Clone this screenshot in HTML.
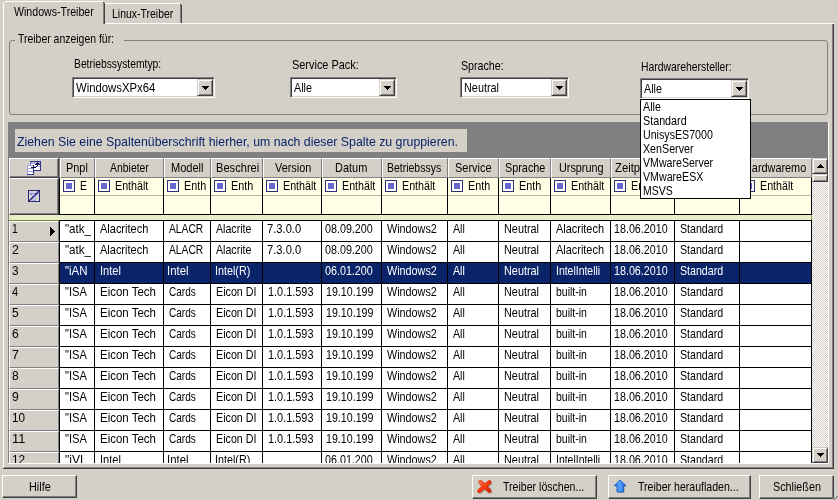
<!DOCTYPE html>
<html lang="de"><head><meta charset="utf-8"><title>Treiber</title>
<style>
html,body{margin:0;padding:0}
body{width:838px;height:500px;overflow:hidden;background:#d4d0c8;position:relative;font-family:"Liberation Sans",sans-serif;font-size:13px;line-height:15px;color:#000}
#app{position:absolute;left:0;top:0;width:838px;height:500px;overflow:hidden;will-change:opacity}
.a{position:absolute}
.t{position:absolute;white-space:nowrap;transform-origin:0 0;display:block}
.btn{background:#d4d0c8;box-sizing:border-box;border:1px solid;border-color:#fff #404040 #404040 #fff;box-shadow:inset -1px -1px 0 #808080}
.sbtn{background:#d4d0c8;box-sizing:border-box;border:1px solid;border-color:#d4d0c8 #404040 #404040 #d4d0c8;box-shadow:inset 1px 1px 0 #fff, inset -1px -1px 0 #808080}
.sunk{box-sizing:border-box;border:1px solid;border-color:#808080 #fff #fff #808080;box-shadow:inset 1px 1px 0 #404040, inset -1px -1px 0 #d4d0c8}
.hd{background:#d4d0c8;box-sizing:border-box;border:1px solid;border-color:#fff #808080 #808080 #fff}
.hd2{background:#d4d0c8;box-sizing:border-box;border:1px solid;border-color:#fff #404040 #404040 #fff;box-shadow:inset -1px -1px 0 #808080}
.rh{background:#d4d0c8;box-sizing:border-box;border:1px solid;border-color:#fff #808080 #808080 #fff}
.cb{width:12px;height:12px;box-sizing:border-box;border:1px solid #30307c;background:#fff}
.trk{background:repeating-conic-gradient(#fff 0 25%, #d4d0c8 0 50%) 0 0/2px 2px}
</style></head>
<body>
<div id="app">
<!-- tab control -->
<div class="a" style="left:3px;top:23px;width:831px;height:1px;background:#fff"></div>
<div class="a" style="left:3px;top:23px;width:1px;height:445px;background:#fff"></div>
<div class="a" style="left:832px;top:24px;width:1px;height:444px;background:#808080"></div>
<div class="a" style="left:833px;top:24px;width:1px;height:445px;background:#404040"></div>
<div class="a" style="left:4px;top:467px;width:829px;height:1px;background:#808080"></div>
<div class="a" style="left:3px;top:468px;width:831px;height:1px;background:#404040"></div>
<div class="a" style="left:105px;top:3px;width:75px;height:1px;background:#fff"></div>
<div class="a" style="left:180px;top:5px;width:1px;height:18px;background:#808080"></div>
<div class="a" style="left:181px;top:5px;width:1px;height:18px;background:#404040"></div>
<div class="a" style="left:180px;top:4px;width:1px;height:1px;background:#404040"></div>
<span class="t" style="left:111.79px;top:6px;transform:scaleX(0.8053)">Linux-Treiber</span>
<div class="a" style="left:3px;top:1px;width:102px;height:23px;background:#d4d0c8"></div>
<div class="a" style="left:5px;top:1px;width:98px;height:1px;background:#fff"></div>
<div class="a" style="left:4px;top:2px;width:1px;height:1px;background:#fff"></div>
<div class="a" style="left:3px;top:3px;width:1px;height:21px;background:#fff"></div>
<div class="a" style="left:103px;top:3px;width:1px;height:21px;background:#808080"></div>
<div class="a" style="left:104px;top:3px;width:1px;height:21px;background:#404040"></div>
<div class="a" style="left:103px;top:2px;width:1px;height:1px;background:#404040"></div>
<span class="t" style="left:14.2px;top:4px;transform:scaleX(0.8156)">Windows-Treiber</span>
<!-- group box -->
<div class="a" style="left:9px;top:40px;width:819px;height:75px;border:1px solid #808080;border-radius:3px;box-sizing:border-box"></div>
<div class="a" style="left:15px;top:33px;width:109px;height:14px;background:#d4d0c8"></div>
<span class="t" style="left:17.84px;top:31px;transform:scaleX(0.8037)">Treiber anzeigen für:</span>
<span class="t" style="left:73.71px;top:56px;transform:scaleX(0.7939)">Betriebssystemtyp:</span>
<span class="t" style="left:292.08px;top:57px;transform:scaleX(0.8408)">Service Pack:</span>
<span class="t" style="left:461.29px;top:58px;transform:scaleX(0.8194)">Sprache:</span>
<span class="t" style="left:640.9px;top:59px;transform:scaleX(0.7996)">Hardwarehersteller:</span>
<div class="a sunk" style="left:72px;top:77px;width:143px;height:21px;background:#fff"><div class="a sbtn" style="right:1px;top:1px;width:16px;height:17px"></div></div>
<div class="a" style="left:202px;top:86px;width:7px;height:1px;background:#000"></div><div class="a" style="left:203px;top:87px;width:5px;height:1px;background:#000"></div><div class="a" style="left:204px;top:88px;width:3px;height:1px;background:#000"></div><div class="a" style="left:205px;top:89px;width:1px;height:1px;background:#000"></div>
<span class="t" style="left:76.0px;top:80px;transform:scaleX(0.8710)">WindowsXPx64</span>
<div class="a sunk" style="left:290px;top:77px;width:107px;height:21px;background:#fff"><div class="a sbtn" style="right:1px;top:1px;width:16px;height:17px"></div></div>
<div class="a" style="left:384px;top:86px;width:7px;height:1px;background:#000"></div><div class="a" style="left:385px;top:87px;width:5px;height:1px;background:#000"></div><div class="a" style="left:386px;top:88px;width:3px;height:1px;background:#000"></div><div class="a" style="left:387px;top:89px;width:1px;height:1px;background:#000"></div>
<span class="t" style="left:293.5px;top:80px;transform:scaleX(0.8294)">Alle</span>
<div class="a sunk" style="left:460px;top:77px;width:109px;height:21px;background:#fff"><div class="a sbtn" style="right:1px;top:1px;width:16px;height:17px"></div></div>
<div class="a" style="left:556px;top:86px;width:7px;height:1px;background:#000"></div><div class="a" style="left:557px;top:87px;width:5px;height:1px;background:#000"></div><div class="a" style="left:558px;top:88px;width:3px;height:1px;background:#000"></div><div class="a" style="left:559px;top:89px;width:1px;height:1px;background:#000"></div>
<span class="t" style="left:463.66px;top:80px;transform:scaleX(0.8354)">Neutral</span>
<div class="a sunk" style="left:640px;top:78px;width:109px;height:21px;background:#fff"><div class="a sbtn" style="right:1px;top:1px;width:16px;height:17px"></div></div>
<div class="a" style="left:736px;top:87px;width:7px;height:1px;background:#000"></div><div class="a" style="left:737px;top:88px;width:5px;height:1px;background:#000"></div><div class="a" style="left:738px;top:89px;width:3px;height:1px;background:#000"></div><div class="a" style="left:739px;top:90px;width:1px;height:1px;background:#000"></div>
<span class="t" style="left:643.5px;top:81px;transform:scaleX(0.8294)">Alle</span>
<!-- grid -->
<div class="a" style="left:8px;top:122px;width:820px;height:341px;background:#808080"></div>
<div class="a" style="left:8px;top:463px;width:821px;height:1px;background:#fff"></div>
<div class="a" style="left:828px;top:122px;width:1px;height:342px;background:#fff"></div>
<div class="a" style="left:15px;top:129px;width:452px;height:23px;background:#d4d0c8"></div>
<span class="t" style="left:17.32px;top:134px;transform:scaleX(0.9474);color:#0a246a">Ziehen Sie eine Spaltenüberschrift hierher, um nach dieser Spalte zu gruppieren.</span>
<div class="a" style="left:9px;top:158px;width:803px;height:305px;background:#fff;overflow:hidden">
<div class="a" style="left:0px;top:0px;width:803px;height:20px;background:#d4d0c8"></div>
<div class="a hd2" style="left:0;top:0;width:50px;height:20px"><svg class="a" style="left:17px;top:2px" width="14" height="14" viewBox="0 0 14 14" shape-rendering="crispEdges"><rect x="3" y="0" width="11" height="10" fill="#34348c"/><rect x="3" y="1" width="1" height="8" fill="#7c7ccc"/><rect x="4" y="1" width="9" height="2" fill="#a0a0e0"/><rect x="5" y="1" width="2" height="1" fill="#d0d0f0"/><rect x="8" y="1" width="2" height="1" fill="#d0d0f0"/><rect x="4" y="3" width="9" height="6" fill="#fff"/><rect x="4" y="5" width="9" height="1" fill="#a0a0e0"/><rect x="0" y="4" width="7" height="10" fill="#34348c"/><rect x="0" y="4" width="6" height="1" fill="#a0a0e0"/><rect x="0" y="4" width="1" height="9" fill="#a0a0e0"/><rect x="1" y="5" width="5" height="8" fill="#fff"/><rect x="1" y="7" width="5" height="1" fill="#a0a0e0"/><rect x="1" y="10" width="5" height="1" fill="#a0a0e0"/><rect x="4" y="6" width="5" height="1" fill="#14143c"/><rect x="9" y="5" width="1" height="1" fill="#14143c"/><rect x="10" y="3" width="1" height="2" fill="#14143c"/><rect x="8" y="3" width="5" height="1" fill="#14143c"/><rect x="9" y="2" width="3" height="1" fill="#14143c"/><rect x="10" y="1" width="1" height="1" fill="#14143c"/></svg></div>
<div class="a" style="left:50px;top:0px;width:1px;height:20px;background:#808080"></div>
<div class="a hd" style="left:51px;top:0px;width:35px;height:20px;overflow:hidden;"><span class="t" style="left:4.96px;top:1px;transform:scaleX(0.8388)">Pnpl</span></div>
<div class="a hd" style="left:86px;top:0px;width:69px;height:20px;overflow:hidden;"><span class="t" style="left:14.0px;top:1px;transform:scaleX(0.8023)">Anbieter</span></div>
<div class="a hd" style="left:155px;top:0px;width:47px;height:20px;overflow:hidden;"><span class="t" style="left:6.15px;top:1px;transform:scaleX(0.8493)">Modell</span></div>
<div class="a hd" style="left:202px;top:0px;width:52px;height:20px;overflow:hidden;"><span class="t" style="left:4.14px;top:1px;transform:scaleX(0.8555)">Beschrei</span></div>
<div class="a hd" style="left:254px;top:0px;width:59px;height:20px;overflow:hidden;"><span class="t" style="left:11.0px;top:1px;transform:scaleX(0.8353)">Version</span></div>
<div class="a hd" style="left:313px;top:0px;width:60px;height:20px;overflow:hidden;"><span class="t" style="left:12.41px;top:1px;transform:scaleX(0.8425)">Datum</span></div>
<div class="a hd" style="left:373px;top:0px;width:66px;height:20px;overflow:hidden;"><span class="t" style="left:4.44px;top:1px;transform:scaleX(0.8055)">Betriebssys</span></div>
<div class="a hd" style="left:439px;top:0px;width:51px;height:20px;overflow:hidden;"><span class="t" style="left:6.08px;top:1px;transform:scaleX(0.8452)">Service</span></div>
<div class="a hd" style="left:490px;top:0px;width:52px;height:20px;overflow:hidden;"><span class="t" style="left:5.08px;top:1px;transform:scaleX(0.8333)">Sprache</span></div>
<div class="a hd" style="left:542px;top:0px;width:60px;height:20px;overflow:hidden;"><span class="t" style="left:7.17px;top:1px;transform:scaleX(0.8333)">Ursprung</span></div>
<div class="a hd" style="left:602px;top:0px;width:64px;height:20px;overflow:hidden;"><span class="t" style="left:2.65px;top:1px;transform:scaleX(0.8664)">Zeitp</span></div>
<div class="a hd" style="left:666px;top:0px;width:65px;height:20px;overflow:hidden;"></div>
<div class="a hd" style="left:731px;top:0px;width:72px;height:20px;overflow:hidden;"><span class="t" style="left:3.46px;top:1px;transform:scaleX(0.8361)">Hardwaremo</span></div>
<div class="a" style="left:51px;top:20px;width:752px;height:36px;background:#ffffe6"></div>
<div class="a" style="left:51px;top:37px;width:752px;height:1px;background:#b4b4ac"></div>
<div class="a hd2" style="left:0;top:20px;width:50px;height:37px"><svg class="a" style="left:18px;top:11px" width="12" height="12" viewBox="0 0 12 12"><rect x="0.5" y="0.5" width="11" height="11" fill="#dcd8cc" stroke="#28287c" stroke-width="1"/><path d="M1 3 H11 L7.500 6.800 V11 H4.800 V6.800 Z" fill="#8484ec"/><path d="M3.500 4.200 H8.500 L6.600 6.400 V10.500 H5.600 V6.400 Z" fill="#fff"/><path d="M1 11 L11 1" stroke="#20206c" stroke-width="1.3"/></svg></div>
<div class="a" style="left:51px;top:20px;width:34px;height:17px;overflow:hidden;"><div class="a cb" style="left:3px;top:2px"><div class="a" style="left:2px;top:2px;width:6px;height:6px;background:#6868cc"></div></div><span class="t" style="left:19.8px;top:0px;transform:scaleX(0.7986)">E</span></div>
<div class="a" style="left:86px;top:20px;width:68px;height:17px;overflow:hidden;"><div class="a cb" style="left:3px;top:2px"><div class="a" style="left:2px;top:2px;width:6px;height:6px;background:#6868cc"></div></div><span class="t" style="left:19.78px;top:0px;transform:scaleX(0.8228)">Enthält</span></div>
<div class="a" style="left:155px;top:20px;width:46px;height:17px;overflow:hidden;"><div class="a cb" style="left:3px;top:2px"><div class="a" style="left:2px;top:2px;width:6px;height:6px;background:#6868cc"></div></div><span class="t" style="left:19.77px;top:0px;transform:scaleX(0.8273)">Enth</span></div>
<div class="a" style="left:202px;top:20px;width:51px;height:17px;overflow:hidden;"><div class="a cb" style="left:3px;top:2px"><div class="a" style="left:2px;top:2px;width:6px;height:6px;background:#6868cc"></div></div><span class="t" style="left:19.77px;top:0px;transform:scaleX(0.8273)">Enth</span></div>
<div class="a" style="left:254px;top:20px;width:58px;height:17px;overflow:hidden;"><div class="a cb" style="left:3px;top:2px"><div class="a" style="left:2px;top:2px;width:6px;height:6px;background:#6868cc"></div></div><span class="t" style="left:19.78px;top:0px;transform:scaleX(0.8228)">Enthält</span></div>
<div class="a" style="left:313px;top:20px;width:59px;height:17px;overflow:hidden;"><div class="a cb" style="left:3px;top:2px"><div class="a" style="left:2px;top:2px;width:6px;height:6px;background:#6868cc"></div></div><span class="t" style="left:19.78px;top:0px;transform:scaleX(0.8228)">Enthält</span></div>
<div class="a" style="left:373px;top:20px;width:65px;height:17px;overflow:hidden;"><div class="a cb" style="left:3px;top:2px"><div class="a" style="left:2px;top:2px;width:6px;height:6px;background:#6868cc"></div></div><span class="t" style="left:19.78px;top:0px;transform:scaleX(0.8228)">Enthält</span></div>
<div class="a" style="left:439px;top:20px;width:50px;height:17px;overflow:hidden;"><div class="a cb" style="left:3px;top:2px"><div class="a" style="left:2px;top:2px;width:6px;height:6px;background:#6868cc"></div></div><span class="t" style="left:19.77px;top:0px;transform:scaleX(0.8273)">Enth</span></div>
<div class="a" style="left:490px;top:20px;width:51px;height:17px;overflow:hidden;"><div class="a cb" style="left:3px;top:2px"><div class="a" style="left:2px;top:2px;width:6px;height:6px;background:#6868cc"></div></div><span class="t" style="left:19.77px;top:0px;transform:scaleX(0.8273)">Enth</span></div>
<div class="a" style="left:542px;top:20px;width:59px;height:17px;overflow:hidden;"><div class="a cb" style="left:3px;top:2px"><div class="a" style="left:2px;top:2px;width:6px;height:6px;background:#6868cc"></div></div><span class="t" style="left:19.78px;top:0px;transform:scaleX(0.8228)">Enthält</span></div>
<div class="a" style="left:602px;top:20px;width:63px;height:17px;overflow:hidden;"><div class="a cb" style="left:3px;top:2px"><div class="a" style="left:2px;top:2px;width:6px;height:6px;background:#6868cc"></div></div><span class="t" style="left:19.78px;top:0px;transform:scaleX(0.8228)">Enthält</span></div>
<div class="a" style="left:666px;top:20px;width:64px;height:17px;overflow:hidden;"><div class="a cb" style="left:3px;top:2px"><div class="a" style="left:2px;top:2px;width:6px;height:6px;background:#6868cc"></div></div><span class="t" style="left:19.78px;top:0px;transform:scaleX(0.8228)">Enthält</span></div>
<div class="a" style="left:731px;top:20px;width:71px;height:17px;overflow:hidden;"><div class="a cb" style="left:3px;top:2px"><div class="a" style="left:2px;top:2px;width:6px;height:6px;background:#6868cc"></div></div><span class="t" style="left:19.78px;top:0px;transform:scaleX(0.8228)">Enthält</span></div>
<div class="a" style="left:50px;top:20px;width:1px;height:37px;background:#000"></div>
<div class="a" style="left:85px;top:20px;width:1px;height:37px;background:#000"></div>
<div class="a" style="left:154px;top:20px;width:1px;height:37px;background:#000"></div>
<div class="a" style="left:201px;top:20px;width:1px;height:37px;background:#000"></div>
<div class="a" style="left:253px;top:20px;width:1px;height:37px;background:#000"></div>
<div class="a" style="left:312px;top:20px;width:1px;height:37px;background:#000"></div>
<div class="a" style="left:372px;top:20px;width:1px;height:37px;background:#000"></div>
<div class="a" style="left:438px;top:20px;width:1px;height:37px;background:#000"></div>
<div class="a" style="left:489px;top:20px;width:1px;height:37px;background:#000"></div>
<div class="a" style="left:541px;top:20px;width:1px;height:37px;background:#000"></div>
<div class="a" style="left:601px;top:20px;width:1px;height:37px;background:#000"></div>
<div class="a" style="left:665px;top:20px;width:1px;height:37px;background:#000"></div>
<div class="a" style="left:730px;top:20px;width:1px;height:37px;background:#000"></div>
<div class="a" style="left:802px;top:20px;width:1px;height:37px;background:#000"></div>
<div class="a" style="left:50px;top:56px;width:753px;height:1px;background:#000"></div>
<div class="a" style="left:0px;top:57px;width:803px;height:6px;background:#e8eec8"></div>
<div class="a" style="left:0px;top:62px;width:50px;height:1px;background:#7c8438"></div>
<div class="a" style="left:50px;top:62px;width:753px;height:1px;background:#000"></div>
<div class="a" style="left:802px;top:57px;width:1px;height:5px;background:#98a650"></div>
<div class="a rh" style="left:0px;top:63px;width:50px;height:21px;overflow:hidden;"><span class="t" style="left:2.28px;top:-1px;transform:scaleX(0.8000)">1</span><div class="a" style="left:40px;top:5px;width:1px;height:9px;background:#000"></div><div class="a" style="left:41px;top:6px;width:1px;height:7px;background:#000"></div><div class="a" style="left:42px;top:7px;width:1px;height:5px;background:#000"></div><div class="a" style="left:43px;top:8px;width:1px;height:3px;background:#000"></div><div class="a" style="left:44px;top:9px;width:1px;height:1px;background:#000"></div></div>
<div class="a" style="left:51px;top:63px;width:34px;height:20px;overflow:hidden;"><span class="t" style="left:5.05px;top:0px;transform:scaleX(0.8910)">"atk_</span></div>
<div class="a" style="left:86px;top:63px;width:68px;height:20px;overflow:hidden;"><span class="t" style="left:4.7px;top:0px;transform:scaleX(0.8452)">Alacritech</span></div>
<div class="a" style="left:155px;top:63px;width:46px;height:20px;overflow:hidden;"><span class="t" style="left:4.75px;top:0px;transform:scaleX(0.7886)">ALACR</span></div>
<div class="a" style="left:202px;top:63px;width:51px;height:20px;overflow:hidden;"><span class="t" style="left:4.5px;top:0px;transform:scaleX(0.8178)">Alacrite</span></div>
<div class="a" style="left:254px;top:63px;width:58px;height:20px;overflow:hidden;"><span class="t" style="left:4.48px;top:0px;transform:scaleX(0.8592)">7.3.0.0</span></div>
<div class="a" style="left:313px;top:63px;width:59px;height:20px;overflow:hidden;"><span class="t" style="left:3.09px;top:0px;transform:scaleX(0.8260)">08.09.200</span></div>
<div class="a" style="left:373px;top:63px;width:65px;height:20px;overflow:hidden;"><span class="t" style="left:5.0px;top:0px;transform:scaleX(0.8305)">Windows2</span></div>
<div class="a" style="left:439px;top:63px;width:50px;height:20px;overflow:hidden;"><span class="t" style="left:5.0px;top:0px;transform:scaleX(0.8212)">All</span></div>
<div class="a" style="left:490px;top:63px;width:51px;height:20px;overflow:hidden;"><span class="t" style="left:4.66px;top:0px;transform:scaleX(0.8354)">Neutral</span></div>
<div class="a" style="left:542px;top:63px;width:59px;height:20px;overflow:hidden;"><span class="t" style="left:4.75px;top:0px;transform:scaleX(0.8407)">Alacritech</span></div>
<div class="a" style="left:602px;top:63px;width:63px;height:20px;overflow:hidden;"><span class="t" style="left:3.26px;top:0px;transform:scaleX(0.8242)">18.06.2010</span></div>
<div class="a" style="left:666px;top:63px;width:64px;height:20px;overflow:hidden;"><span class="t" style="left:5.09px;top:0px;transform:scaleX(0.8171)">Standard</span></div>
<div class="a" style="left:50px;top:83px;width:753px;height:1px;background:#000"></div>
<div class="a rh" style="left:0px;top:84px;width:50px;height:21px;overflow:hidden;"><span class="t" style="left:2.03px;top:-1px;transform:scaleX(0.9500)">2</span></div>
<div class="a" style="left:51px;top:84px;width:34px;height:20px;overflow:hidden;"><span class="t" style="left:5.05px;top:0px;transform:scaleX(0.8910)">"atk_</span></div>
<div class="a" style="left:86px;top:84px;width:68px;height:20px;overflow:hidden;"><span class="t" style="left:4.7px;top:0px;transform:scaleX(0.8452)">Alacritech</span></div>
<div class="a" style="left:155px;top:84px;width:46px;height:20px;overflow:hidden;"><span class="t" style="left:4.75px;top:0px;transform:scaleX(0.7886)">ALACR</span></div>
<div class="a" style="left:202px;top:84px;width:51px;height:20px;overflow:hidden;"><span class="t" style="left:4.5px;top:0px;transform:scaleX(0.8178)">Alacrite</span></div>
<div class="a" style="left:254px;top:84px;width:58px;height:20px;overflow:hidden;"><span class="t" style="left:4.48px;top:0px;transform:scaleX(0.8592)">7.3.0.0</span></div>
<div class="a" style="left:313px;top:84px;width:59px;height:20px;overflow:hidden;"><span class="t" style="left:3.09px;top:0px;transform:scaleX(0.8260)">08.09.200</span></div>
<div class="a" style="left:373px;top:84px;width:65px;height:20px;overflow:hidden;"><span class="t" style="left:5.0px;top:0px;transform:scaleX(0.8305)">Windows2</span></div>
<div class="a" style="left:439px;top:84px;width:50px;height:20px;overflow:hidden;"><span class="t" style="left:5.0px;top:0px;transform:scaleX(0.8212)">All</span></div>
<div class="a" style="left:490px;top:84px;width:51px;height:20px;overflow:hidden;"><span class="t" style="left:4.66px;top:0px;transform:scaleX(0.8354)">Neutral</span></div>
<div class="a" style="left:542px;top:84px;width:59px;height:20px;overflow:hidden;"><span class="t" style="left:4.75px;top:0px;transform:scaleX(0.8407)">Alacritech</span></div>
<div class="a" style="left:602px;top:84px;width:63px;height:20px;overflow:hidden;"><span class="t" style="left:3.26px;top:0px;transform:scaleX(0.8242)">18.06.2010</span></div>
<div class="a" style="left:666px;top:84px;width:64px;height:20px;overflow:hidden;"><span class="t" style="left:5.09px;top:0px;transform:scaleX(0.8171)">Standard</span></div>
<div class="a" style="left:50px;top:104px;width:753px;height:1px;background:#000"></div>
<div class="a rh" style="left:0px;top:105px;width:50px;height:21px;overflow:hidden;"><span class="t" style="left:2.24px;top:-1px;transform:scaleX(0.9048)">3</span></div>
<div class="a" style="left:51px;top:105px;width:751px;height:20px;background:#0a246a"></div>
<div class="a" style="left:51px;top:105px;width:34px;height:20px;overflow:hidden;"><span class="t" style="left:5.06px;top:0px;transform:scaleX(0.8817);color:#fff">"iAN</span></div>
<div class="a" style="left:86px;top:105px;width:68px;height:20px;overflow:hidden;"><span class="t" style="left:4.73px;top:0px;transform:scaleX(0.8518);color:#fff">Intel</span></div>
<div class="a" style="left:155px;top:105px;width:46px;height:20px;overflow:hidden;"><span class="t" style="left:3.2px;top:0px;transform:scaleX(0.8739);color:#fff">Intel</span></div>
<div class="a" style="left:202px;top:105px;width:51px;height:20px;overflow:hidden;"><span class="t" style="left:4.25px;top:0px;transform:scaleX(0.8292);color:#fff">Intel(R)</span></div>
<div class="a" style="left:313px;top:105px;width:59px;height:20px;overflow:hidden;"><span class="t" style="left:3.09px;top:0px;transform:scaleX(0.8260);color:#fff">06.01.200</span></div>
<div class="a" style="left:373px;top:105px;width:65px;height:20px;overflow:hidden;"><span class="t" style="left:5.0px;top:0px;transform:scaleX(0.8305);color:#fff">Windows2</span></div>
<div class="a" style="left:439px;top:105px;width:50px;height:20px;overflow:hidden;"><span class="t" style="left:5.0px;top:0px;transform:scaleX(0.8212);color:#fff">All</span></div>
<div class="a" style="left:490px;top:105px;width:51px;height:20px;overflow:hidden;"><span class="t" style="left:4.66px;top:0px;transform:scaleX(0.8354);color:#fff">Neutral</span></div>
<div class="a" style="left:542px;top:105px;width:59px;height:20px;overflow:hidden;"><span class="t" style="left:4.79px;top:0px;transform:scaleX(0.8034);color:#fff">IntelIntelli</span></div>
<div class="a" style="left:602px;top:105px;width:63px;height:20px;overflow:hidden;"><span class="t" style="left:3.26px;top:0px;transform:scaleX(0.8242);color:#fff">18.06.2010</span></div>
<div class="a" style="left:666px;top:105px;width:64px;height:20px;overflow:hidden;"><span class="t" style="left:5.09px;top:0px;transform:scaleX(0.8171);color:#fff">Standard</span></div>
<div class="a" style="left:50px;top:125px;width:753px;height:1px;background:#000"></div>
<div class="a rh" style="left:0px;top:126px;width:50px;height:21px;overflow:hidden;"><span class="t" style="left:2.43px;top:-1px;transform:scaleX(0.8507)">4</span></div>
<div class="a" style="left:51px;top:126px;width:34px;height:20px;overflow:hidden;"><span class="t" style="left:5.07px;top:0px;transform:scaleX(0.8566)">"ISA</span></div>
<div class="a" style="left:86px;top:126px;width:68px;height:20px;overflow:hidden;"><span class="t" style="left:4.87px;top:0px;transform:scaleX(0.8821)">Eicon Tech</span></div>
<div class="a" style="left:155px;top:126px;width:46px;height:20px;overflow:hidden;"><span class="t" style="left:5.04px;top:0px;transform:scaleX(0.7715)">Cards</span></div>
<div class="a" style="left:202px;top:126px;width:51px;height:20px;overflow:hidden;"><span class="t" style="left:4.93px;top:0px;transform:scaleX(0.8245)">Eicon DI</span></div>
<div class="a" style="left:254px;top:126px;width:58px;height:20px;overflow:hidden;"><span class="t" style="left:5.0px;top:0px;transform:scaleX(0.8381)">1.0.1.593</span></div>
<div class="a" style="left:313px;top:126px;width:59px;height:20px;overflow:hidden;"><span class="t" style="left:3.51px;top:0px;transform:scaleX(0.8200)">19.10.199</span></div>
<div class="a" style="left:373px;top:126px;width:65px;height:20px;overflow:hidden;"><span class="t" style="left:5.0px;top:0px;transform:scaleX(0.8305)">Windows2</span></div>
<div class="a" style="left:439px;top:126px;width:50px;height:20px;overflow:hidden;"><span class="t" style="left:5.0px;top:0px;transform:scaleX(0.8212)">All</span></div>
<div class="a" style="left:490px;top:126px;width:51px;height:20px;overflow:hidden;"><span class="t" style="left:4.66px;top:0px;transform:scaleX(0.8354)">Neutral</span></div>
<div class="a" style="left:542px;top:126px;width:59px;height:20px;overflow:hidden;"><span class="t" style="left:4.95px;top:0px;transform:scaleX(0.8065)">built-in</span></div>
<div class="a" style="left:602px;top:126px;width:63px;height:20px;overflow:hidden;"><span class="t" style="left:3.26px;top:0px;transform:scaleX(0.8242)">18.06.2010</span></div>
<div class="a" style="left:666px;top:126px;width:64px;height:20px;overflow:hidden;"><span class="t" style="left:5.09px;top:0px;transform:scaleX(0.8171)">Standard</span></div>
<div class="a" style="left:50px;top:146px;width:753px;height:1px;background:#000"></div>
<div class="a rh" style="left:0px;top:147px;width:50px;height:21px;overflow:hidden;"><span class="t" style="left:2.14px;top:-1px;transform:scaleX(0.9194)">5</span></div>
<div class="a" style="left:51px;top:147px;width:34px;height:20px;overflow:hidden;"><span class="t" style="left:5.07px;top:0px;transform:scaleX(0.8566)">"ISA</span></div>
<div class="a" style="left:86px;top:147px;width:68px;height:20px;overflow:hidden;"><span class="t" style="left:4.87px;top:0px;transform:scaleX(0.8821)">Eicon Tech</span></div>
<div class="a" style="left:155px;top:147px;width:46px;height:20px;overflow:hidden;"><span class="t" style="left:5.04px;top:0px;transform:scaleX(0.7715)">Cards</span></div>
<div class="a" style="left:202px;top:147px;width:51px;height:20px;overflow:hidden;"><span class="t" style="left:4.93px;top:0px;transform:scaleX(0.8245)">Eicon DI</span></div>
<div class="a" style="left:254px;top:147px;width:58px;height:20px;overflow:hidden;"><span class="t" style="left:5.0px;top:0px;transform:scaleX(0.8381)">1.0.1.593</span></div>
<div class="a" style="left:313px;top:147px;width:59px;height:20px;overflow:hidden;"><span class="t" style="left:3.51px;top:0px;transform:scaleX(0.8200)">19.10.199</span></div>
<div class="a" style="left:373px;top:147px;width:65px;height:20px;overflow:hidden;"><span class="t" style="left:5.0px;top:0px;transform:scaleX(0.8305)">Windows2</span></div>
<div class="a" style="left:439px;top:147px;width:50px;height:20px;overflow:hidden;"><span class="t" style="left:5.0px;top:0px;transform:scaleX(0.8212)">All</span></div>
<div class="a" style="left:490px;top:147px;width:51px;height:20px;overflow:hidden;"><span class="t" style="left:4.66px;top:0px;transform:scaleX(0.8354)">Neutral</span></div>
<div class="a" style="left:542px;top:147px;width:59px;height:20px;overflow:hidden;"><span class="t" style="left:4.95px;top:0px;transform:scaleX(0.8065)">built-in</span></div>
<div class="a" style="left:602px;top:147px;width:63px;height:20px;overflow:hidden;"><span class="t" style="left:3.26px;top:0px;transform:scaleX(0.8242)">18.06.2010</span></div>
<div class="a" style="left:666px;top:147px;width:64px;height:20px;overflow:hidden;"><span class="t" style="left:5.09px;top:0px;transform:scaleX(0.8171)">Standard</span></div>
<div class="a" style="left:50px;top:167px;width:753px;height:1px;background:#000"></div>
<div class="a rh" style="left:0px;top:168px;width:50px;height:21px;overflow:hidden;"><span class="t" style="left:2.04px;top:-1px;transform:scaleX(0.9344)">6</span></div>
<div class="a" style="left:51px;top:168px;width:34px;height:20px;overflow:hidden;"><span class="t" style="left:5.07px;top:0px;transform:scaleX(0.8566)">"ISA</span></div>
<div class="a" style="left:86px;top:168px;width:68px;height:20px;overflow:hidden;"><span class="t" style="left:4.87px;top:0px;transform:scaleX(0.8821)">Eicon Tech</span></div>
<div class="a" style="left:155px;top:168px;width:46px;height:20px;overflow:hidden;"><span class="t" style="left:5.04px;top:0px;transform:scaleX(0.7715)">Cards</span></div>
<div class="a" style="left:202px;top:168px;width:51px;height:20px;overflow:hidden;"><span class="t" style="left:4.93px;top:0px;transform:scaleX(0.8245)">Eicon DI</span></div>
<div class="a" style="left:254px;top:168px;width:58px;height:20px;overflow:hidden;"><span class="t" style="left:5.0px;top:0px;transform:scaleX(0.8381)">1.0.1.593</span></div>
<div class="a" style="left:313px;top:168px;width:59px;height:20px;overflow:hidden;"><span class="t" style="left:3.51px;top:0px;transform:scaleX(0.8200)">19.10.199</span></div>
<div class="a" style="left:373px;top:168px;width:65px;height:20px;overflow:hidden;"><span class="t" style="left:5.0px;top:0px;transform:scaleX(0.8305)">Windows2</span></div>
<div class="a" style="left:439px;top:168px;width:50px;height:20px;overflow:hidden;"><span class="t" style="left:5.0px;top:0px;transform:scaleX(0.8212)">All</span></div>
<div class="a" style="left:490px;top:168px;width:51px;height:20px;overflow:hidden;"><span class="t" style="left:4.66px;top:0px;transform:scaleX(0.8354)">Neutral</span></div>
<div class="a" style="left:542px;top:168px;width:59px;height:20px;overflow:hidden;"><span class="t" style="left:4.95px;top:0px;transform:scaleX(0.8065)">built-in</span></div>
<div class="a" style="left:602px;top:168px;width:63px;height:20px;overflow:hidden;"><span class="t" style="left:3.26px;top:0px;transform:scaleX(0.8242)">18.06.2010</span></div>
<div class="a" style="left:666px;top:168px;width:64px;height:20px;overflow:hidden;"><span class="t" style="left:5.09px;top:0px;transform:scaleX(0.8171)">Standard</span></div>
<div class="a" style="left:50px;top:188px;width:753px;height:1px;background:#000"></div>
<div class="a rh" style="left:0px;top:189px;width:50px;height:21px;overflow:hidden;"><span class="t" style="left:2.03px;top:-1px;transform:scaleX(0.9500)">7</span></div>
<div class="a" style="left:51px;top:189px;width:34px;height:20px;overflow:hidden;"><span class="t" style="left:5.07px;top:0px;transform:scaleX(0.8566)">"ISA</span></div>
<div class="a" style="left:86px;top:189px;width:68px;height:20px;overflow:hidden;"><span class="t" style="left:4.87px;top:0px;transform:scaleX(0.8821)">Eicon Tech</span></div>
<div class="a" style="left:155px;top:189px;width:46px;height:20px;overflow:hidden;"><span class="t" style="left:5.04px;top:0px;transform:scaleX(0.7715)">Cards</span></div>
<div class="a" style="left:202px;top:189px;width:51px;height:20px;overflow:hidden;"><span class="t" style="left:4.93px;top:0px;transform:scaleX(0.8245)">Eicon DI</span></div>
<div class="a" style="left:254px;top:189px;width:58px;height:20px;overflow:hidden;"><span class="t" style="left:5.0px;top:0px;transform:scaleX(0.8381)">1.0.1.593</span></div>
<div class="a" style="left:313px;top:189px;width:59px;height:20px;overflow:hidden;"><span class="t" style="left:3.51px;top:0px;transform:scaleX(0.8200)">19.10.199</span></div>
<div class="a" style="left:373px;top:189px;width:65px;height:20px;overflow:hidden;"><span class="t" style="left:5.0px;top:0px;transform:scaleX(0.8305)">Windows2</span></div>
<div class="a" style="left:439px;top:189px;width:50px;height:20px;overflow:hidden;"><span class="t" style="left:5.0px;top:0px;transform:scaleX(0.8212)">All</span></div>
<div class="a" style="left:490px;top:189px;width:51px;height:20px;overflow:hidden;"><span class="t" style="left:4.66px;top:0px;transform:scaleX(0.8354)">Neutral</span></div>
<div class="a" style="left:542px;top:189px;width:59px;height:20px;overflow:hidden;"><span class="t" style="left:4.95px;top:0px;transform:scaleX(0.8065)">built-in</span></div>
<div class="a" style="left:602px;top:189px;width:63px;height:20px;overflow:hidden;"><span class="t" style="left:3.26px;top:0px;transform:scaleX(0.8242)">18.06.2010</span></div>
<div class="a" style="left:666px;top:189px;width:64px;height:20px;overflow:hidden;"><span class="t" style="left:5.09px;top:0px;transform:scaleX(0.8171)">Standard</span></div>
<div class="a" style="left:50px;top:209px;width:753px;height:1px;background:#000"></div>
<div class="a rh" style="left:0px;top:210px;width:50px;height:21px;overflow:hidden;"><span class="t" style="left:2.14px;top:-1px;transform:scaleX(0.9194)">8</span></div>
<div class="a" style="left:51px;top:210px;width:34px;height:20px;overflow:hidden;"><span class="t" style="left:5.07px;top:0px;transform:scaleX(0.8566)">"ISA</span></div>
<div class="a" style="left:86px;top:210px;width:68px;height:20px;overflow:hidden;"><span class="t" style="left:4.87px;top:0px;transform:scaleX(0.8821)">Eicon Tech</span></div>
<div class="a" style="left:155px;top:210px;width:46px;height:20px;overflow:hidden;"><span class="t" style="left:5.04px;top:0px;transform:scaleX(0.7715)">Cards</span></div>
<div class="a" style="left:202px;top:210px;width:51px;height:20px;overflow:hidden;"><span class="t" style="left:4.93px;top:0px;transform:scaleX(0.8245)">Eicon DI</span></div>
<div class="a" style="left:254px;top:210px;width:58px;height:20px;overflow:hidden;"><span class="t" style="left:5.0px;top:0px;transform:scaleX(0.8381)">1.0.1.593</span></div>
<div class="a" style="left:313px;top:210px;width:59px;height:20px;overflow:hidden;"><span class="t" style="left:3.51px;top:0px;transform:scaleX(0.8200)">19.10.199</span></div>
<div class="a" style="left:373px;top:210px;width:65px;height:20px;overflow:hidden;"><span class="t" style="left:5.0px;top:0px;transform:scaleX(0.8305)">Windows2</span></div>
<div class="a" style="left:439px;top:210px;width:50px;height:20px;overflow:hidden;"><span class="t" style="left:5.0px;top:0px;transform:scaleX(0.8212)">All</span></div>
<div class="a" style="left:490px;top:210px;width:51px;height:20px;overflow:hidden;"><span class="t" style="left:4.66px;top:0px;transform:scaleX(0.8354)">Neutral</span></div>
<div class="a" style="left:542px;top:210px;width:59px;height:20px;overflow:hidden;"><span class="t" style="left:4.95px;top:0px;transform:scaleX(0.8065)">built-in</span></div>
<div class="a" style="left:602px;top:210px;width:63px;height:20px;overflow:hidden;"><span class="t" style="left:3.26px;top:0px;transform:scaleX(0.8242)">18.06.2010</span></div>
<div class="a" style="left:666px;top:210px;width:64px;height:20px;overflow:hidden;"><span class="t" style="left:5.09px;top:0px;transform:scaleX(0.8171)">Standard</span></div>
<div class="a" style="left:50px;top:230px;width:753px;height:1px;background:#000"></div>
<div class="a rh" style="left:0px;top:231px;width:50px;height:21px;overflow:hidden;"><span class="t" style="left:2.04px;top:-1px;transform:scaleX(0.9344)">9</span></div>
<div class="a" style="left:51px;top:231px;width:34px;height:20px;overflow:hidden;"><span class="t" style="left:5.07px;top:0px;transform:scaleX(0.8566)">"ISA</span></div>
<div class="a" style="left:86px;top:231px;width:68px;height:20px;overflow:hidden;"><span class="t" style="left:4.87px;top:0px;transform:scaleX(0.8821)">Eicon Tech</span></div>
<div class="a" style="left:155px;top:231px;width:46px;height:20px;overflow:hidden;"><span class="t" style="left:5.04px;top:0px;transform:scaleX(0.7715)">Cards</span></div>
<div class="a" style="left:202px;top:231px;width:51px;height:20px;overflow:hidden;"><span class="t" style="left:4.93px;top:0px;transform:scaleX(0.8245)">Eicon DI</span></div>
<div class="a" style="left:254px;top:231px;width:58px;height:20px;overflow:hidden;"><span class="t" style="left:5.0px;top:0px;transform:scaleX(0.8381)">1.0.1.593</span></div>
<div class="a" style="left:313px;top:231px;width:59px;height:20px;overflow:hidden;"><span class="t" style="left:3.51px;top:0px;transform:scaleX(0.8200)">19.10.199</span></div>
<div class="a" style="left:373px;top:231px;width:65px;height:20px;overflow:hidden;"><span class="t" style="left:5.0px;top:0px;transform:scaleX(0.8305)">Windows2</span></div>
<div class="a" style="left:439px;top:231px;width:50px;height:20px;overflow:hidden;"><span class="t" style="left:5.0px;top:0px;transform:scaleX(0.8212)">All</span></div>
<div class="a" style="left:490px;top:231px;width:51px;height:20px;overflow:hidden;"><span class="t" style="left:4.66px;top:0px;transform:scaleX(0.8354)">Neutral</span></div>
<div class="a" style="left:542px;top:231px;width:59px;height:20px;overflow:hidden;"><span class="t" style="left:4.95px;top:0px;transform:scaleX(0.8065)">built-in</span></div>
<div class="a" style="left:602px;top:231px;width:63px;height:20px;overflow:hidden;"><span class="t" style="left:3.26px;top:0px;transform:scaleX(0.8242)">18.06.2010</span></div>
<div class="a" style="left:666px;top:231px;width:64px;height:20px;overflow:hidden;"><span class="t" style="left:5.09px;top:0px;transform:scaleX(0.8171)">Standard</span></div>
<div class="a" style="left:50px;top:251px;width:753px;height:1px;background:#000"></div>
<div class="a rh" style="left:0px;top:252px;width:50px;height:21px;overflow:hidden;"><span class="t" style="left:1.79px;top:-1px;transform:scaleX(0.9008)">10</span></div>
<div class="a" style="left:51px;top:252px;width:34px;height:20px;overflow:hidden;"><span class="t" style="left:5.07px;top:0px;transform:scaleX(0.8566)">"ISA</span></div>
<div class="a" style="left:86px;top:252px;width:68px;height:20px;overflow:hidden;"><span class="t" style="left:4.87px;top:0px;transform:scaleX(0.8821)">Eicon Tech</span></div>
<div class="a" style="left:155px;top:252px;width:46px;height:20px;overflow:hidden;"><span class="t" style="left:5.04px;top:0px;transform:scaleX(0.7715)">Cards</span></div>
<div class="a" style="left:202px;top:252px;width:51px;height:20px;overflow:hidden;"><span class="t" style="left:4.93px;top:0px;transform:scaleX(0.8245)">Eicon DI</span></div>
<div class="a" style="left:254px;top:252px;width:58px;height:20px;overflow:hidden;"><span class="t" style="left:5.0px;top:0px;transform:scaleX(0.8381)">1.0.1.593</span></div>
<div class="a" style="left:313px;top:252px;width:59px;height:20px;overflow:hidden;"><span class="t" style="left:3.51px;top:0px;transform:scaleX(0.8200)">19.10.199</span></div>
<div class="a" style="left:373px;top:252px;width:65px;height:20px;overflow:hidden;"><span class="t" style="left:5.0px;top:0px;transform:scaleX(0.8305)">Windows2</span></div>
<div class="a" style="left:439px;top:252px;width:50px;height:20px;overflow:hidden;"><span class="t" style="left:5.0px;top:0px;transform:scaleX(0.8212)">All</span></div>
<div class="a" style="left:490px;top:252px;width:51px;height:20px;overflow:hidden;"><span class="t" style="left:4.66px;top:0px;transform:scaleX(0.8354)">Neutral</span></div>
<div class="a" style="left:542px;top:252px;width:59px;height:20px;overflow:hidden;"><span class="t" style="left:4.95px;top:0px;transform:scaleX(0.8065)">built-in</span></div>
<div class="a" style="left:602px;top:252px;width:63px;height:20px;overflow:hidden;"><span class="t" style="left:3.26px;top:0px;transform:scaleX(0.8242)">18.06.2010</span></div>
<div class="a" style="left:666px;top:252px;width:64px;height:20px;overflow:hidden;"><span class="t" style="left:5.09px;top:0px;transform:scaleX(0.8171)">Standard</span></div>
<div class="a" style="left:50px;top:272px;width:753px;height:1px;background:#000"></div>
<div class="a rh" style="left:0px;top:273px;width:50px;height:21px;overflow:hidden;"><span class="t" style="left:1.71px;top:-1px;transform:scaleX(0.9833)">11</span></div>
<div class="a" style="left:51px;top:273px;width:34px;height:20px;overflow:hidden;"><span class="t" style="left:5.07px;top:0px;transform:scaleX(0.8566)">"ISA</span></div>
<div class="a" style="left:86px;top:273px;width:68px;height:20px;overflow:hidden;"><span class="t" style="left:4.87px;top:0px;transform:scaleX(0.8821)">Eicon Tech</span></div>
<div class="a" style="left:155px;top:273px;width:46px;height:20px;overflow:hidden;"><span class="t" style="left:5.04px;top:0px;transform:scaleX(0.7715)">Cards</span></div>
<div class="a" style="left:202px;top:273px;width:51px;height:20px;overflow:hidden;"><span class="t" style="left:4.93px;top:0px;transform:scaleX(0.8245)">Eicon DI</span></div>
<div class="a" style="left:254px;top:273px;width:58px;height:20px;overflow:hidden;"><span class="t" style="left:5.0px;top:0px;transform:scaleX(0.8381)">1.0.1.593</span></div>
<div class="a" style="left:313px;top:273px;width:59px;height:20px;overflow:hidden;"><span class="t" style="left:3.51px;top:0px;transform:scaleX(0.8200)">19.10.199</span></div>
<div class="a" style="left:373px;top:273px;width:65px;height:20px;overflow:hidden;"><span class="t" style="left:5.0px;top:0px;transform:scaleX(0.8305)">Windows2</span></div>
<div class="a" style="left:439px;top:273px;width:50px;height:20px;overflow:hidden;"><span class="t" style="left:5.0px;top:0px;transform:scaleX(0.8212)">All</span></div>
<div class="a" style="left:490px;top:273px;width:51px;height:20px;overflow:hidden;"><span class="t" style="left:4.66px;top:0px;transform:scaleX(0.8354)">Neutral</span></div>
<div class="a" style="left:542px;top:273px;width:59px;height:20px;overflow:hidden;"><span class="t" style="left:4.95px;top:0px;transform:scaleX(0.8065)">built-in</span></div>
<div class="a" style="left:602px;top:273px;width:63px;height:20px;overflow:hidden;"><span class="t" style="left:3.26px;top:0px;transform:scaleX(0.8242)">18.06.2010</span></div>
<div class="a" style="left:666px;top:273px;width:64px;height:20px;overflow:hidden;"><span class="t" style="left:5.09px;top:0px;transform:scaleX(0.8171)">Standard</span></div>
<div class="a" style="left:50px;top:293px;width:753px;height:1px;background:#000"></div>
<div class="a rh" style="left:0px;top:294px;width:50px;height:21px;overflow:hidden;"><span class="t" style="left:1.78px;top:-1px;transform:scaleX(0.9147)">12</span></div>
<div class="a" style="left:51px;top:294px;width:34px;height:20px;overflow:hidden;"><span class="t" style="left:5.03px;top:0px;transform:scaleX(0.9333)">"iVL</span></div>
<div class="a" style="left:86px;top:294px;width:68px;height:20px;overflow:hidden;"><span class="t" style="left:4.73px;top:0px;transform:scaleX(0.8518)">Intel</span></div>
<div class="a" style="left:155px;top:294px;width:46px;height:20px;overflow:hidden;"><span class="t" style="left:3.2px;top:0px;transform:scaleX(0.8739)">Intel</span></div>
<div class="a" style="left:202px;top:294px;width:51px;height:20px;overflow:hidden;"><span class="t" style="left:4.25px;top:0px;transform:scaleX(0.8292)">Intel(R)</span></div>
<div class="a" style="left:313px;top:294px;width:59px;height:20px;overflow:hidden;"><span class="t" style="left:3.09px;top:0px;transform:scaleX(0.8260)">06.01.200</span></div>
<div class="a" style="left:373px;top:294px;width:65px;height:20px;overflow:hidden;"><span class="t" style="left:5.0px;top:0px;transform:scaleX(0.8305)">Windows2</span></div>
<div class="a" style="left:439px;top:294px;width:50px;height:20px;overflow:hidden;"><span class="t" style="left:5.0px;top:0px;transform:scaleX(0.8212)">All</span></div>
<div class="a" style="left:490px;top:294px;width:51px;height:20px;overflow:hidden;"><span class="t" style="left:4.66px;top:0px;transform:scaleX(0.8354)">Neutral</span></div>
<div class="a" style="left:542px;top:294px;width:59px;height:20px;overflow:hidden;"><span class="t" style="left:4.79px;top:0px;transform:scaleX(0.8034)">IntelIntelli</span></div>
<div class="a" style="left:602px;top:294px;width:63px;height:20px;overflow:hidden;"><span class="t" style="left:3.26px;top:0px;transform:scaleX(0.8242)">18.06.2010</span></div>
<div class="a" style="left:666px;top:294px;width:64px;height:20px;overflow:hidden;"><span class="t" style="left:5.09px;top:0px;transform:scaleX(0.8171)">Standard</span></div>
<div class="a" style="left:50px;top:314px;width:753px;height:1px;background:#000"></div>
<div class="a" style="left:50px;top:62px;width:1px;height:260px;background:#000"></div>
<div class="a" style="left:85px;top:62px;width:1px;height:260px;background:#000"></div>
<div class="a" style="left:154px;top:62px;width:1px;height:260px;background:#000"></div>
<div class="a" style="left:201px;top:62px;width:1px;height:260px;background:#000"></div>
<div class="a" style="left:253px;top:62px;width:1px;height:260px;background:#000"></div>
<div class="a" style="left:312px;top:62px;width:1px;height:260px;background:#000"></div>
<div class="a" style="left:372px;top:62px;width:1px;height:260px;background:#000"></div>
<div class="a" style="left:438px;top:62px;width:1px;height:260px;background:#000"></div>
<div class="a" style="left:489px;top:62px;width:1px;height:260px;background:#000"></div>
<div class="a" style="left:541px;top:62px;width:1px;height:260px;background:#000"></div>
<div class="a" style="left:601px;top:62px;width:1px;height:260px;background:#000"></div>
<div class="a" style="left:665px;top:62px;width:1px;height:260px;background:#000"></div>
<div class="a" style="left:730px;top:62px;width:1px;height:260px;background:#000"></div>
<div class="a" style="left:802px;top:62px;width:1px;height:260px;background:#000"></div>
</div>
<!-- scrollbar -->
<div class="a trk" style="left:812px;top:158px;width:16px;height:305px"><div class="a sbtn" style="left:0;top:0;width:16px;height:16px"><div class="a" style="left:7px;top:5px;width:1px;height:1px;background:#000"></div><div class="a" style="left:6px;top:6px;width:3px;height:1px;background:#000"></div><div class="a" style="left:5px;top:7px;width:5px;height:1px;background:#000"></div><div class="a" style="left:4px;top:8px;width:7px;height:1px;background:#000"></div></div><div class="a sbtn" style="left:0;top:16px;width:16px;height:8px"></div><div class="a sbtn" style="left:0;top:289px;width:16px;height:16px"><div class="a" style="left:4px;top:5px;width:7px;height:1px;background:#000"></div><div class="a" style="left:5px;top:6px;width:5px;height:1px;background:#000"></div><div class="a" style="left:6px;top:7px;width:3px;height:1px;background:#000"></div><div class="a" style="left:7px;top:8px;width:1px;height:1px;background:#000"></div></div></div>
<!-- dropdown list -->
<div class="a" style="left:640px;top:99px;width:111px;height:100px;box-sizing:border-box;border:1px solid #000;background:#fff"></div>
<span class="t" style="left:643.1px;top:99px;transform:scaleX(0.8246)">Alle</span>
<span class="t" style="left:643.39px;top:113px;transform:scaleX(0.8268)">Standard</span>
<span class="t" style="left:642.98px;top:127px;transform:scaleX(0.8198)">UnisysES7000</span>
<span class="t" style="left:642.94px;top:141px;transform:scaleX(0.8216)">XenServer</span>
<span class="t" style="left:643.1px;top:155px;transform:scaleX(0.8159)">VMwareServer</span>
<span class="t" style="left:643.1px;top:169px;transform:scaleX(0.8188)">VMwareESX</span>
<span class="t" style="left:642.99px;top:183px;transform:scaleX(0.8102)">MSVS</span>
<!-- buttons -->
<div class="a btn" style="left:2px;top:475px;width:75px;height:23px"></div>
<span class="t" style="left:28.76px;top:479px;transform:scaleX(0.8367)">Hilfe</span>
<div class="a btn" style="left:472px;top:475px;width:125px;height:24px"><svg class="a" style="left:3px;top:2px" width="18" height="18" viewBox="0 0 18 18"><defs><linearGradient id="gx" x1="0" y1="0" x2="1" y2="1"><stop offset="0" stop-color="#ff7048"/><stop offset="0.5" stop-color="#fa3c10"/><stop offset="1" stop-color="#d82808"/></linearGradient></defs><path d="M4.500 4.300 L13.300 12.800 M13.300 4.300 L3.300 12.800" fill="none" stroke="#8c8880" stroke-opacity="0.55" stroke-width="4.200" stroke-linecap="round" transform="translate(1,1)"/><path d="M4.500 4.300 L13.300 12.800 M13.300 4.300 L3.300 12.800" fill="none" stroke="#c82408" stroke-width="4.200" stroke-linecap="round"/><path d="M4.500 4.300 L13.300 12.800 M13.300 4.300 L3.300 12.800" fill="none" stroke="url(#gx)" stroke-width="3.200" stroke-linecap="round"/></svg></div>
<span class="t" style="left:502.94px;top:479px;transform:scaleX(0.8134)">Treiber löschen...</span>
<div class="a btn" style="left:608px;top:475px;width:143px;height:24px"><svg class="a" style="left:3px;top:2px" width="18" height="18" viewBox="0 0 18 18"><defs><linearGradient id="gu" x1="0" y1="0" x2="1" y2="0"><stop offset="0" stop-color="#1c68d8"/><stop offset="0.45" stop-color="#58a4fc"/><stop offset="1" stop-color="#1460d0"/></linearGradient></defs><path d="M8 2 L14 7.700 L11.600 7.700 L11.600 14 L5 14 L5 7.700 L2.200 7.700 Z" fill="#8c8880" fill-opacity="0.55" transform="translate(1,1)"/><path d="M8 2 L14 7.700 L11.600 7.700 L11.600 14 L5 14 L5 7.700 L2.200 7.700 Z" fill="url(#gu)" stroke="#1054c0" stroke-width="0.8" stroke-linejoin="round"/></svg></div>
<span class="t" style="left:637.84px;top:479px;transform:scaleX(0.8131)">Treiber heraufladen...</span>
<div class="a btn" style="left:759px;top:475px;width:75px;height:24px"></div>
<span class="t" style="left:773.09px;top:479px;transform:scaleX(0.8283)">Schließen</span>
<svg class="a" style="left:826px;top:488px" width="12" height="12" viewBox="0 0 12 12"><path d="M6.500 12 L12 6.500" stroke="#fff" stroke-width="1"/><path d="M7.700 12 L12 7.700" stroke="#808080" stroke-width="1.4"/></svg>
</div>
</body></html>
